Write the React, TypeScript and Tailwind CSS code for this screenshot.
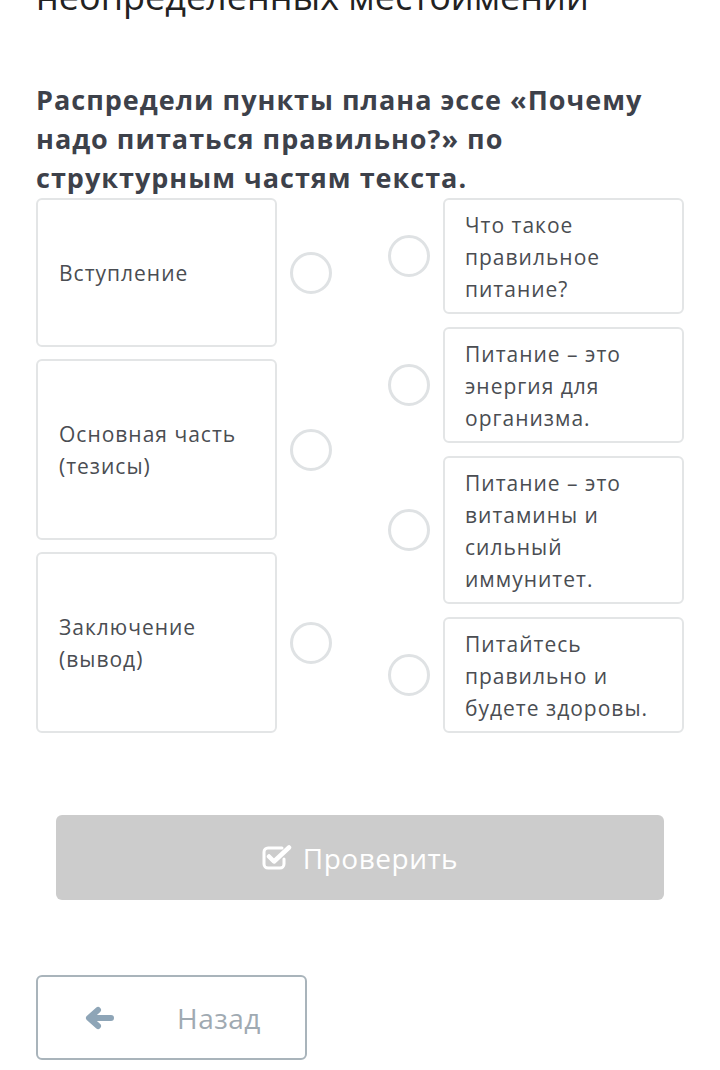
const left = [
  { text: "Вступление", h: "h-[149px]" },
  { text: "Основная часть (тезисы)", h: "h-[181px]" },
  { text: "Заключение (вывод)", h: "h-[181px]" },
];

const right = [
  "Что такое правильное питание?",
  "Питание – это энергия для организма.",
  "Питание – это витамины и сильный иммунитет.",
  "Питайтесь правильно и будете здоровы.",
];

function Circle() {
  return (
    <div className="h-[42px] w-[42px] shrink-0 rounded-full border-[3px] border-[#dfe2e4] bg-white" />
  );
}

function CheckIcon() {
  return (
    <svg width="30" height="25" viewBox="0 0 30 25" fill="none">
      <path
        d="M20 3H6a4 4 0 0 0-4 4v12a4 4 0 0 0 4 4h12a4 4 0 0 0 4-4v-5"
        stroke="white"
        strokeWidth="3"
        strokeLinecap="round"
      />
      <path
        d="M7 11.5l5 5L27 2.5"
        stroke="white"
        strokeWidth="4.5"
        strokeLinecap="round"
        strokeLinejoin="round"
      />
    </svg>
  );
}

function ArrowIcon() {
  return (
    <svg width="30" height="24" viewBox="0 0 30 24" fill="none">
      <path
        d="M27 12H6M14 4l-9 8 9 8"
        stroke="#8ea5b7"
        strokeWidth="6"
        strokeLinecap="round"
        strokeLinejoin="round"
      />
    </svg>
  );
}

export default function App() {
  return (
    <div className="min-h-[1070px] overflow-hidden bg-white px-9 font-['Open_Sans',sans-serif]">
      <p className="-mt-[25px] whitespace-nowrap text-[36px] leading-[44px] text-[#222]">
        неопределенных местоимений
      </p>

      <h1 className="mt-[61px] text-[27px] font-bold leading-[39px] tracking-[1px] text-[#3d414a]">
        Распредели пункты плана эссе «Почему надо питаться правильно?» по структурным частям текста.
      </h1>

      <div className="mt-px flex justify-between">
        <div className="flex flex-col gap-3">
          {left.map((l) => (
            <div key={l.text} className="flex items-center gap-[13px]">
              <div
                className={`flex w-[241px] items-center rounded-md border-2 border-[#e3e5e6] px-[21px] text-[21px] leading-[32px] tracking-[1px] text-[#4a4d52] ${l.h}`}
              >
                {l.text}
              </div>
              <Circle />
            </div>
          ))}
        </div>

        <div className="flex flex-col gap-[13px]">
          {right.map((r) => (
            <div key={r} className="flex items-center gap-[13px]">
              <Circle />
              <div className="w-[241px] rounded-md border-2 border-[#e3e5e6] px-[20px] pb-[7px] pt-[9px] text-[21px] leading-[32px] tracking-[1px] text-[#4a4d52]">
                {r}
              </div>
            </div>
          ))}
        </div>
      </div>

      <button className="mx-5 mt-[82px] flex h-[85px] w-[608px] items-center justify-center gap-[11px] rounded-md bg-[#cccccc] text-[28px] tracking-[0.5px] text-white">
        <CheckIcon />
        <span>Проверить</span>
      </button>

      <button className="mt-[75px] flex h-[85px] w-[271px] items-center rounded-md border-2 border-[#a9b4bb] bg-white pl-[46px] text-[28px] tracking-[0.5px] text-[#a0aab2]">
        <ArrowIcon />
        <span className="ml-[63px]">Назад</span>
      </button>
    </div>
  );
}
